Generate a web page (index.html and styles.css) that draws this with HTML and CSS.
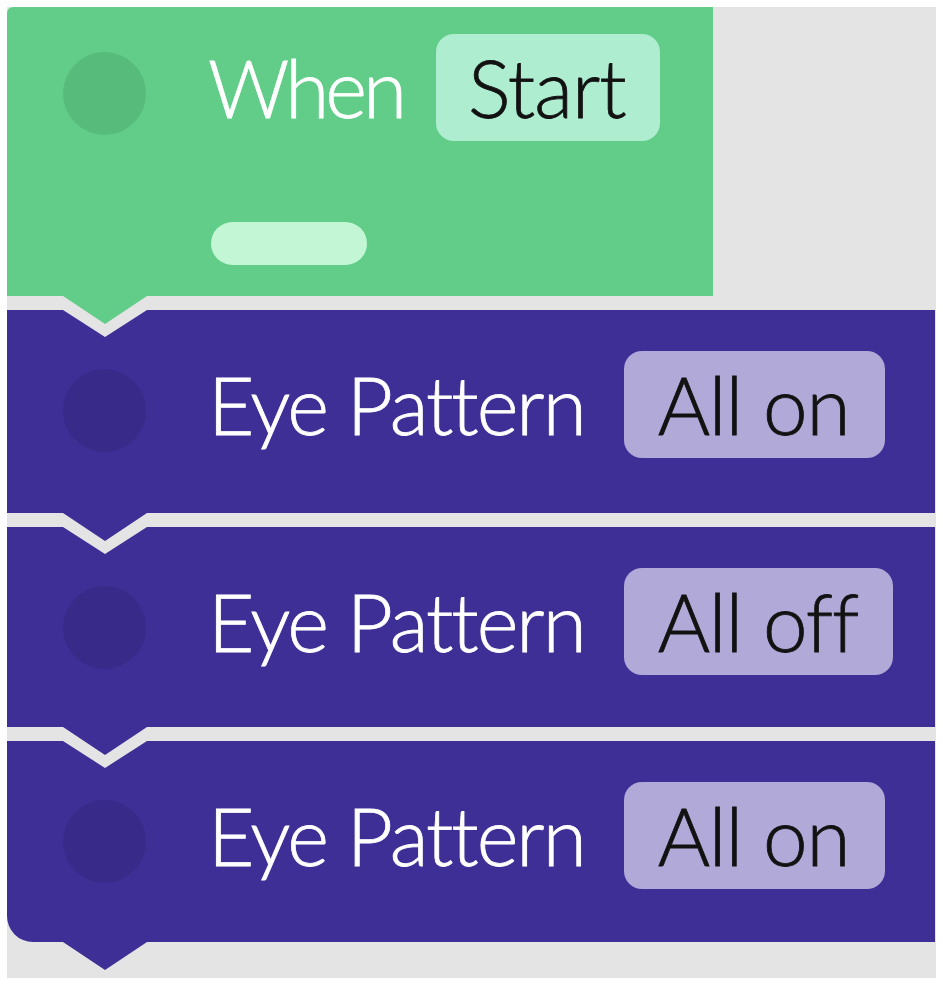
FILE: index.html
```html
<!DOCTYPE html>
<html>
<head>
<meta charset="utf-8">
<link rel="stylesheet" href="styles.css">
</head>
<body>
<div class="canvas">
  <div class="block hat">
    <div class="row">
      <span class="dot"></span>
      <span class="label">When</span>
      <span class="pill">Start</span>
    </div>
    <span class="bar"></span>
  </div>
  <div class="block cmd b1">
    <div class="row">
      <span class="dot"></span>
      <span class="label">Eye Pattern</span>
      <span class="pill">All on</span>
    </div>
  </div>
  <div class="block cmd b2">
    <div class="row">
      <span class="dot"></span>
      <span class="label">Eye Pattern</span>
      <span class="pill">All off</span>
    </div>
  </div>
  <div class="block cmd b3 last">
    <div class="row">
      <span class="dot"></span>
      <span class="label">Eye Pattern</span>
      <span class="pill">All on</span>
    </div>
  </div>
</div>
</body>
</html>
```
FILE: styles.css
```css
html, body {
  margin: 0;
  background: #ffffff;
}
body {
  font-family: Lato, "Open Sans", sans-serif;
  font-weight: 300;
}
.canvas {
  margin: 7px;
  width: 929px;
  height: 971px;
  background: #e4e4e4;
  display: flex;
  flex-direction: column;
  gap: 14px;
}
.block {
  position: relative;
  box-sizing: border-box;
  padding-left: 56px;
  flex: none;
}
.block::after {
  content: "";
  position: absolute;
  left: 56px;
  top: 100%;
  width: 84px;
  height: 28px;
  clip-path: polygon(0 0, 100% 0, 50% 100%);
  z-index: 2;
}
.cmd::before {
  content: "";
  position: absolute;
  left: 56px;
  top: 0;
  width: 84px;
  height: 27px;
  background: #e4e4e4;
  clip-path: polygon(0 0, 100% 0, 50% 100%);
  z-index: 1;
}
.hat {
  width: 706px;
  height: 289px;
  padding-top: 27px;
  background: #61cd89;
  border-top-left-radius: 6px;
}
.hat::after {
  background: #61cd89;
}
.cmd {
  width: 928px;
  padding-top: 41px;
  background: #3d2f96;
}
.cmd::after {
  background: #3d2f96;
}
.b1 { height: 203px; }
.b2 { height: 200px; }
.b3 { height: 201px; }
.last {
  border-bottom-left-radius: 26px;
}
.row {
  display: flex;
  align-items: flex-start;
}
.dot {
  width: 83px;
  height: 83px;
  border-radius: 50%;
  margin-top: 18px;
  margin-right: 62px;
  flex: none;
}
.hat .dot { background: #57bb7b; }
.cmd .dot { background: #372a89; }
.label {
  font-size: 80px;
  line-height: 107px;
  letter-spacing: -2px;
  color: #ffffff;
  -webkit-text-stroke: 0.8px #ffffff;
  margin-right: 39px;
  white-space: nowrap;
}
.hat .label {
  letter-spacing: -4px;
  margin-right: 33px;
}
.pill {
  height: 107px;
  line-height: 107px;
  padding: 0 35px 0 34px;
  border-radius: 18px;
  font-size: 80px;
  letter-spacing: -1px;
  color: #121212;
  -webkit-text-stroke: 0.8px #121212;
  white-space: nowrap;
}
.hat .pill {
  background: #aeedd0;
  padding: 0 34px 0 32px;
}
.cmd .pill { background: #b1a9d8; }
.bar {
  display: block;
  margin-left: 148px;
  margin-top: 81px;
  width: 156px;
  height: 43px;
  border-radius: 22px;
  background: #c3f6d5;
}
```
